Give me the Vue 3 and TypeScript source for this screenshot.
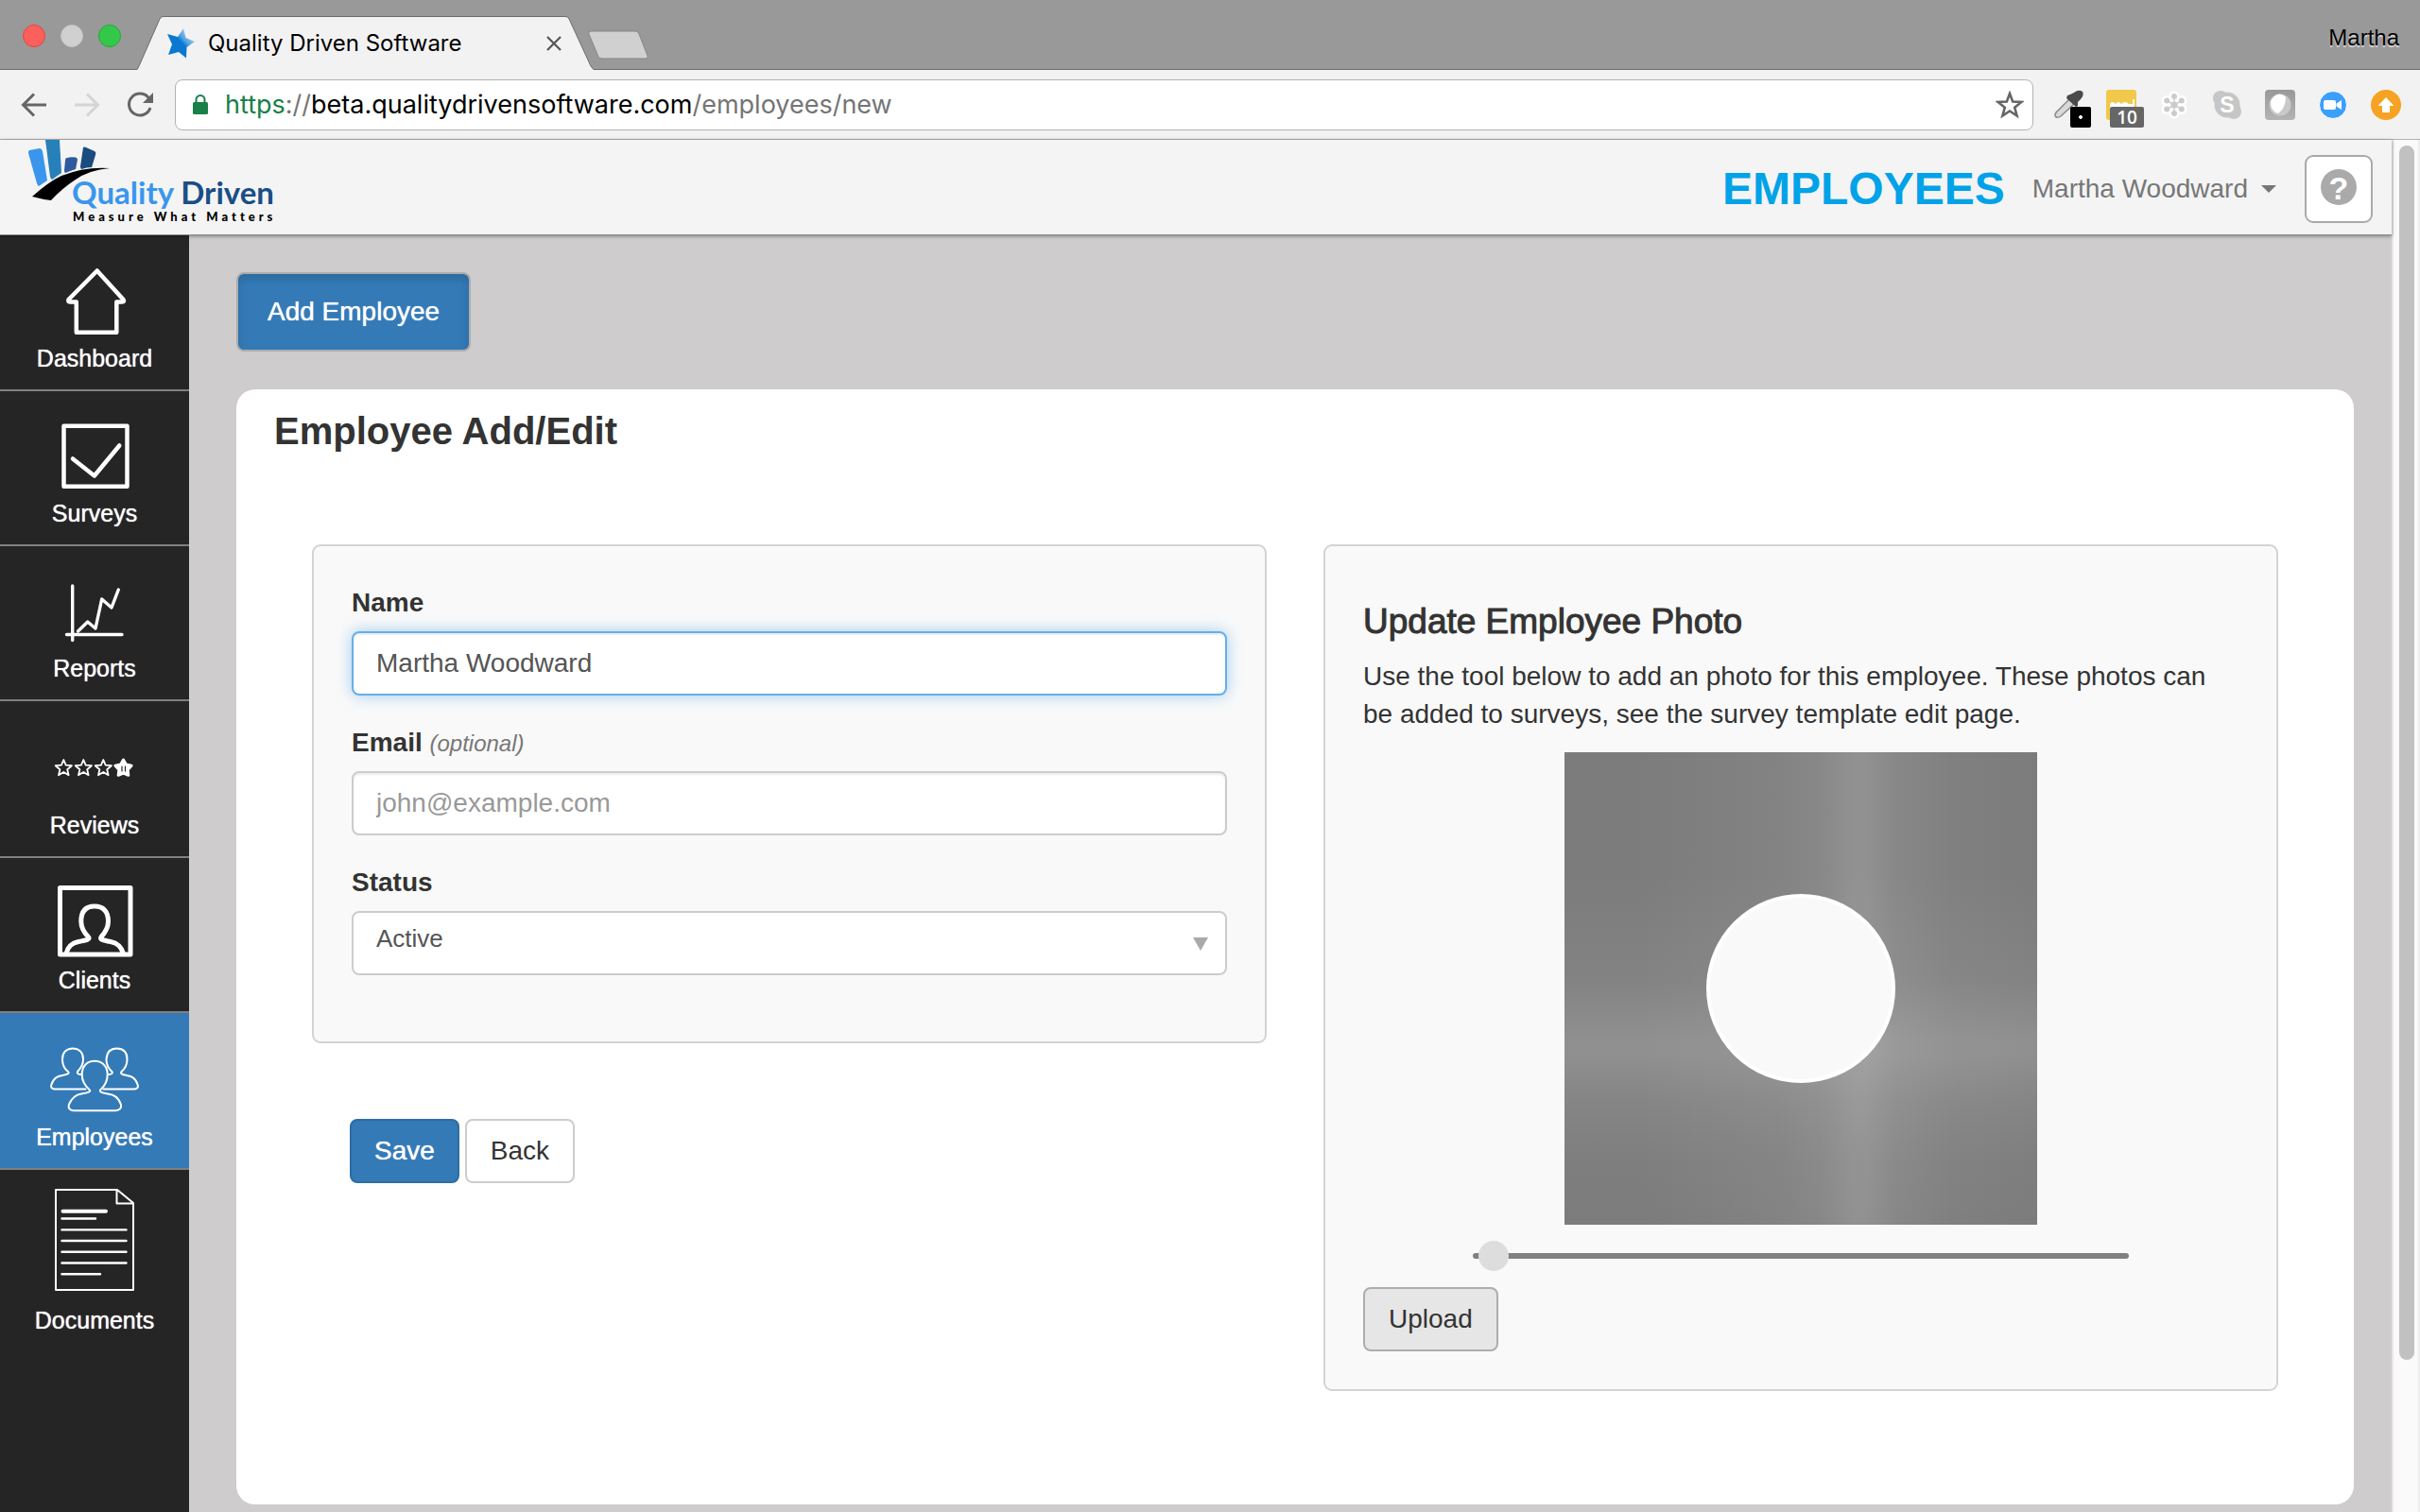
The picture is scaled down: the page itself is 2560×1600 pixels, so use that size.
<script setup lang="ts">
import { ref } from 'vue'

interface NavItem {
  label: string
  icon: string
  height: number
}

const navItems: NavItem[] = [
  { label: 'Dashboard', icon: 'house', height: 114 },
  { label: 'Surveys', icon: 'check', height: 114 },
  { label: 'Reports', icon: 'chart', height: 114 },
  { label: 'Reviews', icon: 'stars', height: 116 },
  { label: 'Clients', icon: 'client', height: 114 },
  { label: 'Employees', icon: 'people', height: 116 },
  { label: 'Documents', icon: 'document', height: 144 },
]

const activeItem = ref('Employees')
const name = ref('Martha Woodward')
const email = ref('')
const status = ref('Active')
const zoom = ref(0.01)

function starPoints(cx: number, cy: number, r: number, inner = 0.45): string {
  const points: string[] = []
  for (let i = 0; i < 10; i++) {
    const radius = i % 2 === 0 ? r : r * inner
    const angle = (Math.PI / 5) * i - Math.PI / 2
    points.push(`${(cx + radius * Math.cos(angle)).toFixed(1)},${(cy + radius * Math.sin(angle)).toFixed(1)}`)
  }
  return points.join(' ')
}
</script>

<template>
  <div class="browser">
    <div class="tab-strip">
      <div class="lights">
        <span class="light red"></span>
        <span class="light grey"></span>
        <span class="light green"></span>
      </div>
      <div class="tab">
        <svg class="tab-shape" viewBox="0 0 483 57" preserveAspectRatio="none" aria-hidden="true">
          <path d="M0 57 L2 53 L24 3 Q25 .5 28 .5 H453 Q456 .5 457 3 L480 53 L483 57 Z" fill="#f2f2f2" />
          <path d="M0 56.500 L2 53 L24 3 Q25 .5 28 .5 H453 Q456 .5 457 3 L480 53 L483 56.500" fill="none" stroke="#6c6c6c" />
        </svg>
        <svg class="favicon" width="30" height="32" viewBox="0 0 30 32" aria-hidden="true">
          <defs>
            <linearGradient id="fav" x1="1" y1="0" x2="0.4" y2="0.6">
              <stop offset="0.2" stop-color="#c3dff3" />
              <stop offset="0.65" stop-color="#4a9fe0" />
              <stop offset="0.8" stop-color="#0a78d1" />
            </linearGradient>
          </defs>
          <path d="M18 0 L20.500 10 L30 14 L21.500 20 L21 31.500 L13 25 L2 28 L6 17 L1 6 L12 9 Z" fill="url(#fav)" />
        </svg>
        <span class="tab-title">Quality Driven Software</span>
        <button class="plain tab-close" type="button" aria-label="Close tab">
          <svg width="16" height="16" viewBox="0 0 16 16"><path d="M1 1 L15 15 M15 1 L1 15" stroke="#555" stroke-width="2.200" /></svg>
        </button>
      </div>
      <button class="plain new-tab" type="button" aria-label="New tab">
        <svg width="66" height="32" viewBox="0 0 66 32">
          <path d="M4 1 H51 Q54 1 55 4 L64 27 Q65 30 62 30 H16 Q13 30 12 28 L2 4 Q1 1 4 1 Z" fill="#d0d0d0" stroke="#858585" />
        </svg>
      </button>
      <span class="profile">Martha</span>
    </div>

    <div class="toolbar">
      <div class="nav-buttons">
        <button class="plain" type="button" aria-label="Back">
          <svg width="28" height="28" viewBox="0 0 28 28"><path d="M27 14 H3 M14 2.500 L2.500 14 L14 25.500" fill="none" stroke="#666" stroke-width="3" /></svg>
        </button>
        <button class="plain" type="button" aria-label="Forward">
          <svg width="28" height="28" viewBox="0 0 28 28"><path d="M1 14 H25 M14 2.500 L25.500 14 L14 25.500" fill="none" stroke="#d4d4d4" stroke-width="3" /></svg>
        </button>
        <button class="plain" type="button" aria-label="Reload">
          <svg width="28" height="28" viewBox="0 0 28 28">
            <path d="M23.500 7 A11.500 11.500 0 1 0 25 17" fill="none" stroke="#666" stroke-width="3" />
            <path d="M28 1 V12 H17 Z" fill="#666" />
          </svg>
        </button>
      </div>
      <div class="omnibox">
        <svg width="16" height="22" viewBox="0 0 16 22" aria-hidden="true">
          <path d="M3.500 9 V5.500 A4.500 4.500 0 0 1 12.500 5.500 V9" fill="none" stroke="#188048" stroke-width="2" />
          <rect x="0" y="8" width="16" height="13" rx="1.500" fill="#188048" />
        </svg>
        <div class="url" role="textbox" tabindex="0" aria-label="Address"><span class="secure">https</span><span class="dim">://</span>beta.qualitydrivensoftware.com<span class="dim">/employees/new</span></div>
        <button class="plain" type="button" aria-label="Bookmark">
          <svg width="30" height="30" viewBox="0 0 30 30"><polygon :points="starPoints(15, 16, 13, 0.42)" fill="none" stroke="#666" stroke-width="2.600" /></svg>
        </button>
      </div>
      <div class="extensions">
        <span class="ext">
          <svg width="32" height="32" viewBox="0 0 32 32">
            <path d="M3 29 Q1 27 3 24 L17 10 L22 15 L8 28 Q5 30 3 29 Z" fill="#d9d9d9" stroke="#8a8a8a" stroke-width="1.500" />
            <path d="M15 6 L18 5 L22 3 Q27 -1 31 2 Q33 6 29 10 L26 13 L26 17 L24 18 L14 9 Z" fill="#4a4a4a" />
          </svg>
          <span class="badge black"></span>
        </span>
        <span class="ext">
          <svg width="32" height="32" viewBox="0 0 32 32">
            <rect width="32" height="32" rx="3" fill="#f0c84b" />
            <path d="M4 20 V15 Q7 11 10 15 Q13 11 16 15 Q20 11 24 15 L28 15 V10 H30 V20 Z" fill="#fff" />
          </svg>
          <span class="badge count">10</span>
        </span>
        <span class="ext">
          <svg width="32" height="32" viewBox="0 0 32 32">
            <g fill="#fff">
              <circle cx="16" cy="16" r="9" />
              <circle cx="16" cy="7" r="5.500" /><circle cx="16" cy="25" r="5.500" />
              <circle cx="8.200" cy="11.500" r="5.500" /><circle cx="23.800" cy="11.500" r="5.500" />
              <circle cx="8.200" cy="20.500" r="5.500" /><circle cx="23.800" cy="20.500" r="5.500" />
            </g>
            <path d="M16 7 V25 M8.200 11.500 L23.800 20.500 M8.200 20.500 L23.800 11.500" stroke="#d0d0d0" stroke-width="1.500" />
            <g fill="#cbcbcb">
              <circle cx="16" cy="16" r="3.600" />
              <circle cx="16" cy="7" r="3" /><circle cx="16" cy="25" r="3" />
              <circle cx="8.200" cy="11.500" r="3" /><circle cx="23.800" cy="11.500" r="3" />
              <circle cx="8.200" cy="20.500" r="3" /><circle cx="23.800" cy="20.500" r="3" />
            </g>
          </svg>
        </span>
        <span class="ext">
          <svg width="32" height="32" viewBox="0 0 32 32">
            <g fill="#c6c6c6"><circle cx="16" cy="16" r="13.500" /><circle cx="9" cy="9" r="8" /><circle cx="23" cy="23" r="8" /></g>
            <text x="16" y="24" text-anchor="middle" font-family="Liberation Sans, sans-serif" font-weight="700" font-size="23" fill="#fff">S</text>
          </svg>
        </span>
        <span class="ext">
          <svg width="32" height="32" viewBox="0 0 32 32">
            <defs>
              <linearGradient id="tile" x1="0" y1="0" x2="0" y2="1">
                <stop offset="0" stop-color="#989898" />
                <stop offset="1" stop-color="#b4b4b4" />
              </linearGradient>
            </defs>
            <rect width="32" height="32" rx="4" fill="url(#tile)" />
            <circle cx="16" cy="16" r="11.500" fill="#c9c9c9" />
            <path d="M6 13 Q8 6 15 4.500 Q20 5 22 8 Q22 19 14 25 Q6 23 6 13 Z" fill="#fff" />
          </svg>
        </span>
        <span class="ext">
          <svg width="32" height="32" viewBox="0 0 32 32">
            <circle cx="16" cy="16" r="14.500" fill="#3c9ffb" stroke="#fff" />
            <rect x="6" y="11" width="13" height="10" rx="2" fill="#fff" />
            <path d="M19.500 14.500 L25 11 V21 L19.500 17.500 Z" fill="#fff" />
          </svg>
        </span>
        <span class="ext">
          <svg width="32" height="32" viewBox="0 0 32 32">
            <circle cx="16" cy="16" r="16" fill="#f6a323" />
            <path d="M16 8 L24.500 17 H20 V24 H12 V17 H7.500 Z" fill="#fff" />
          </svg>
        </span>
      </div>
    </div>

    <div class="viewport">
      <div class="page">
        <header class="header">
          <svg class="logo" width="300" height="100" viewBox="0 0 300 100" role="img" aria-label="Quality Driven, Measure What Matters">
            <path d="M31 11 L42 9 Q44 9 45 12 L50 43 L41 49 Q40 49 39 46 L30 14 Q30 11 31 11 Z" fill="#3a96ec" />
            <path d="M48 0 H63 L65 35 L55 42 Q54 42 53 39 Z" fill="#2780b9" />
            <path d="M71 19 Q74 18 80 18.500 Q82 19 82 21 L80 31 Q74 33 69 35 Q68 35 68 32 L69 22 Q69 19 71 19 Z" fill="#2e5b9f" />
            <path d="M88 8 Q89 7 91 8 L100 12 Q102 13 101 16 L97 29 Q92 29 86 31 Q85 30 85 28 Z" fill="#1a4c80" />
            <path d="M34 60 Q52 44 65 38 Q90 28 116 30 Q94 32 80 42 Q66 51 54 64 Q45 63 34 60 Z" fill="#000" />
            <text x="76" y="68" class="logo-name"><tspan fill="#3a96ec">Quality</tspan><tspan fill="#1a4e86"> Driven</tspan></text>
            <text x="77" y="86" class="logo-tag">Measure What Matters</text>
          </svg>
          <div class="header-right">
            <span class="section">EMPLOYEES</span>
            <button class="plain user" type="button">Martha Woodward
              <svg width="16" height="8" viewBox="0 0 16 8" aria-hidden="true"><path d="M0 0 H16 L8 8 Z" fill="#777" /></svg>
            </button>
            <button class="help" type="button" aria-label="Help"><span class="help-mark">?</span></button>
          </div>
        </header>

        <div class="body">
          <nav class="sidebar">
            <a
              v-for="item in navItems"
              :key="item.label"
              href="#"
              class="nav-item"
              :class="{ active: item.label === activeItem }"
              @click.prevent="activeItem = item.label"
            >
              <svg width="200" :height="item.height" :viewBox="`0 0 200 ${item.height}`" fill="none" stroke="#fff" stroke-linecap="round" stroke-linejoin="round" aria-hidden="true">
                <path v-if="item.icon === 'house'" stroke-width="4.500" d="M102.700 36.500 L72.500 67 Q71.500 69.500 74 69.500 H80.800 V101.800 H123.300 V69.500 H129 Q132 69.500 130.500 67 Z" />
                <g v-else-if="item.icon === 'check'" stroke-width="4.500">
                  <rect x="67.500" y="36.800" width="67" height="64" />
                  <path d="M77 71.500 L99.800 89.500 L126.300 57.500" />
                </g>
                <g v-else-if="item.icon === 'chart'" stroke-width="3.400">
                  <path d="M76.700 42 V99.500 M70.500 93.500 H129" />
                  <path d="M82.500 90 L92.700 80 L101 87 L107.700 56 L118 65 L125.300 46" />
                </g>
                <g v-else-if="item.icon === 'stars'" stroke-width="1.800">
                  <polygon v-for="cx in [67.300, 88.300, 109.300]" :key="cx" :points="starPoints(cx, 71, 9)" />
                  <polygon :points="starPoints(130.500, 71, 9, 0.55)" fill="#fff" stroke-width="3" />
                  <path d="M129 69 V74 M132.500 69 V74" stroke="#252525" stroke-width="1.200" />
                </g>
                <g v-else-if="item.icon === 'client'" stroke-width="5">
                  <rect x="63.500" y="31.500" width="74.500" height="70.500" />
                  <path d="M70 101 C72 93 76 90 83 88.500 C91 87 96 86 93.500 83.500 C88 78 85.800 73 85.800 67 C85.800 56 91 51 100 51 C109 51 114.500 56 114.500 67 C114.500 73 112 78 107 83.500 C105 86 109 87 117 88.500 C124 90 128 93 130.500 101" />
                </g>
                <g v-else-if="item.icon === 'people'" stroke-width="2">
                  <path d="M90.500 80.500 H58 Q53 80 54.300 76 C57 68 61 67 66 66 C71 65 74 64 72 62 C68 59 66 54 66 49 C66 41 71 37.500 77 37.500 C83 37.500 88 41 88 49 C88 54 85 59 82 62 C81 64 83 65 86 65" />
                  <path d="M109.500 80.500 H142 Q147 80 145.700 76 C143 68 139 67 134 66 C129 65 127 64 128.500 62 C132 59 134.500 54 134.500 49 C134.500 41 130 37.500 123.500 37.500 C117 37.500 113 41 112.500 49 C112.500 54 115 59 118.500 62 C120 64 117 65 114.500 65" />
                  <path d="M78 103.300 H122 Q129 102.500 128 97 C125 89 121 86.500 114 85.500 C107 84.500 104.500 83 106.500 81 C111 77 113.700 71 113.700 65 C113.700 55 107 50.800 100.200 50.800 C93 50.800 86.700 55 86.700 65 C86.700 71 90 77 94.500 81 C97 83 93 84.500 86 85.500 C79 86.500 75 92 72.800 97 Q71.500 102.500 78 103.300 Z" />
                </g>
                <g v-else stroke-width="2">
                  <path d="M59 21 H124 L141 35 V127 H59 Z M123.500 21 V35.500 H141" />
                  <path stroke-width="4" d="M66.500 43.700 H112" />
                  <path stroke-width="2.400" d="M65.500 51.500 H101 M65.500 63.400 H133.500 M65.500 75 H133.500 M65.500 86.800 H133.500 M65.500 98.500 H133.500 M65.500 110.300 H106" />
                </g>
              </svg>
              <span class="nav-label">{{ item.label }}</span>
            </a>
          </nav>

          <main class="main">
            <button class="btn btn-primary btn-add" type="button">Add Employee</button>
            <section class="card">
              <h1 class="card-title">Employee Add/Edit</h1>
              <div class="columns">
                <form class="column" @submit.prevent>
                  <div class="panel">
                    <div class="field">
                      <label for="name">Name</label>
                      <input id="name" v-model="name" class="control focused" type="text" />
                    </div>
                    <div class="field">
                      <label for="email">Email <em>(optional)</em></label>
                      <input id="email" v-model="email" class="control" type="email" placeholder="john@example.com" />
                    </div>
                    <div class="field">
                      <label for="status">Status</label>
                      <div class="select-wrap">
                        <select id="status" v-model="status" class="control select">
                          <option>Active</option>
                          <option>Inactive</option>
                        </select>
                        <svg class="select-arrow" width="16" height="14" viewBox="0 0 16 14" aria-hidden="true"><path d="M0 0 H16 L8 14 Z" fill="#aaa" /></svg>
                      </div>
                    </div>
                  </div>
                  <div class="actions">
                    <button class="btn btn-primary" type="submit">Save</button>
                    <button class="btn btn-default" type="button">Back</button>
                  </div>
                </form>
                <div class="column">
                  <div class="panel">
                    <h2 class="panel-title">Update Employee Photo</h2>
                    <p class="panel-text">Use the tool below to add an photo for this employee. These photos can be added to surveys, see the survey template edit page.</p>
                    <div class="cropper"><div class="crop-circle"></div></div>
                    <input v-model.number="zoom" class="slider" type="range" min="0" max="1" step="0.01" aria-label="Photo zoom" />
                    <button class="btn btn-default btn-upload" type="button">Upload</button>
                  </div>
                </div>
              </div>
            </section>
          </main>
        </div>
      </div>
      <div class="scrollbar" aria-hidden="true"><div class="thumb"></div></div>
    </div>
  </div>
</template>

<style>
body {
  margin: 0;
}
</style>

<style scoped>
.browser,
.browser * {
  box-sizing: border-box;
}
.browser {
  display: flex;
  flex-direction: column;
  min-height: 100vh;
  background: #cecccd;
  color: #333;
  font-family: "Liberation Sans", Arial, sans-serif;
  font-size: 28px;
  line-height: 40px;
}
button,
input,
select {
  font: inherit;
  margin: 0;
}
svg {
  display: block;
  flex: none;
}
.plain {
  display: block;
  padding: 0;
  border: 0;
  background: none;
  color: inherit;
}

/* Tab strip */
.tab-strip {
  display: flex;
  height: 74px;
  background: #999;
  border-bottom: 1px solid #6c6c6c;
}
.lights {
  display: flex;
  gap: 16px;
  padding: 26px 17px 0 24px;
}
.light {
  width: 24px;
  height: 24px;
  border-radius: 50%;
}
.red {
  background: #fc605c;
  border: 1px solid #df4744;
}
.grey {
  background: #d0d0d0;
  border: 1px solid #c2c2c2;
}
.green {
  background: #34c84a;
  border: 1px solid #24a936;
}
.tab {
  position: relative;
  display: flex;
  align-items: center;
  flex: 0 0 483px;
  height: 57px;
  margin-top: 17px;
  padding: 0 34px 0 31px;
}
.tab-shape {
  position: absolute;
  inset: 0;
  width: 100%;
  height: 100%;
}
.favicon,
.tab-title,
.tab-close {
  position: relative;
}
.tab-title {
  flex: 1;
  margin-left: 14px;
  color: #000;
  font-family: Inter, sans-serif;
  font-size: 24px;
  line-height: 32px;
}
.new-tab {
  align-self: flex-end;
  margin: 0 0 9px -7px;
}
.profile {
  margin-left: auto;
  padding: 20px 22px 0 0;
  color: #000;
  font-size: 24px;
  text-shadow: 0 2px 1px #d8d8d8;
}

/* Toolbar */
.toolbar {
  display: flex;
  align-items: center;
  height: 74px;
  padding: 0 20px 0 22px;
  background: #f2f2f2;
  border-bottom: 1px solid #b0b0b0;
}
.nav-buttons {
  display: flex;
  gap: 28px;
}
.omnibox {
  display: flex;
  align-items: center;
  flex: 1;
  height: 54px;
  margin: 0 21px 0 23px;
  padding: 0 9px 0 18px;
  background: #fff;
  border: 1px solid #b2b2b2;
  border-radius: 8px;
}
.url {
  flex: 1;
  margin-left: 18px;
  color: #000;
  font-family: Inter, sans-serif;
  font-size: 27px;
}
.secure {
  color: #188048;
}
.dim {
  color: #757575;
}
.extensions {
  display: flex;
  gap: 24px;
}
.ext {
  position: relative;
  width: 32px;
  height: 32px;
}
.badge {
  position: absolute;
  height: 22px;
  border-radius: 2px;
  top: 18px;
}
.black {
  left: 18px;
  width: 22px;
  background: radial-gradient(circle, #fff 0 2px, #000 2px);
}
.count {
  left: 4px;
  width: 36px;
  background: #666;
  color: #fff;
  font-family: "Open Sans", sans-serif;
  font-weight: 600;
  font-size: 19px;
  line-height: 22px;
  text-align: center;
}

/* Page */
.viewport {
  display: flex;
  flex: 1;
}
.page {
  display: flex;
  flex-direction: column;
  flex: 1;
  min-width: 0;
}
.scrollbar {
  display: grid;
  grid-template-rows: 8fr 1fr;
  flex: 0 0 30px;
  padding: 6px 4px 0 6px;
  background: #fafafa;
  border-left: 2px solid #e7e7e7;
  border-right: 2px solid #ededed;
}
.thumb {
  width: 16px;
  border-radius: 8px;
  background: #c1c1c1;
}
.header {
  position: relative;
  display: flex;
  justify-content: space-between;
  height: 101px;
  background: #f4f4f4;
  border-bottom: 1px solid #8c8c8c;
  box-shadow: 0 1px 4px rgba(0, 0, 0, 0.4);
}
.logo-name {
  font-family: Lato, sans-serif;
  font-weight: 700;
  font-size: 33px;
}
.logo-tag {
  font-family: Lato, sans-serif;
  font-weight: 900;
  font-size: 13px;
  letter-spacing: 4px;
}
.header-right {
  display: flex;
  align-items: center;
  padding: 4px 20px 0 0;
}
.section {
  color: #00a2e8;
  font-size: 48px;
  font-weight: 700;
}
.user {
  display: flex;
  align-items: center;
  gap: 14px;
  margin: 0 30px 0 29px;
  color: #777;
}
.help {
  display: flex;
  align-items: center;
  justify-content: center;
  width: 72px;
  height: 72px;
  padding: 0 0 4px;
  background: #fff;
  border: 2px solid #aaa;
  border-radius: 9px;
}
.help-mark {
  width: 38px;
  height: 38px;
  border-radius: 50%;
  background: #aaa;
  color: #fff;
  font-size: 34px;
  font-weight: 700;
  line-height: 40px;
  text-align: center;
}
.body {
  display: flex;
  flex: 1;
}
.sidebar {
  flex: 0 0 200px;
  padding-top: 1px;
  background: #252525;
}
.nav-item {
  display: block;
  padding-bottom: 18px;
  border-bottom: 2px solid #808080;
  color: #fff;
  text-decoration: none;
}
.nav-item:last-child {
  border-bottom: 0;
}
.nav-item.active {
  background: #337ab7;
}
.nav-label {
  display: block;
  font-size: 25px;
  line-height: 30px;
  text-align: center;
  text-shadow: 0 0 1px #fff;
}
.main {
  display: flex;
  flex-direction: column;
  align-items: flex-start;
  flex: 1;
  min-width: 0;
  padding: 39px 40px 8px 50px;
}
.btn {
  height: 68px;
  padding: 0 24px;
  border: 2px solid;
  border-radius: 8px;
}
.btn-primary {
  background: #337ab7;
  border-color: #2e6da4;
  color: #fff;
  text-shadow: 0 0 1px #fff;
}
.btn-default {
  padding: 0 25px;
  background: #fff;
  border-color: #ccc;
  color: #333;
}
.btn-add {
  height: 84px;
  padding: 0 31px;
  border-color: #adadad;
  box-shadow: inset 0 6px 10px rgba(0, 0, 0, 0.125);
}
.card {
  align-self: stretch;
  flex: 1;
  margin-top: 40px;
  padding: 21px 80px 80px;
  background: #fff;
  border-radius: 20px;
}
.card-title {
  margin: 0 -40px;
  font-size: 40px;
  font-weight: 700;
  line-height: 46px;
}
.columns {
  display: grid;
  grid-template-columns: 1fr 1fr;
  gap: 60px;
  margin-top: 97px;
}
.panel {
  padding: 40px;
  background: #f9f9f9;
  border: 2px solid #d3d3d3;
  border-radius: 9px;
}
.field {
  margin-bottom: 30px;
}
label {
  display: block;
  margin-bottom: 10px;
  font-weight: 700;
}
label em {
  color: #777;
  font-size: 24px;
  font-weight: 400;
  line-height: 24px;
}
.control {
  display: block;
  width: 100%;
  height: 68px;
  padding: 0 24px;
  background: #fff;
  border: 2px solid #ccc;
  border-radius: 8px;
  box-shadow: inset 0 2px 2px rgba(0, 0, 0, 0.075);
  color: #555;
  outline: none;
}
.control::placeholder {
  color: #999;
  opacity: 1;
}
.focused {
  border-color: #66afe9;
  box-shadow: inset 0 2px 2px rgba(0, 0, 0, 0.075), 0 0 16px rgba(102, 175, 233, 0.6);
}
.select-wrap {
  position: relative;
}
.select {
  appearance: none;
  padding-bottom: 10px;
  box-shadow: none;
  font-size: 26px;
}
.select-arrow {
  position: absolute;
  top: 28px;
  right: 20px;
  pointer-events: none;
}
.actions {
  display: flex;
  gap: 6px;
  padding: 80px 40px 0;
}
.panel-title {
  margin: 20px 0 18px;
  font-size: 37px;
  font-weight: 400;
  line-height: 40px;
  -webkit-text-stroke: 1px #333;
}
.panel-text {
  margin: 0 0 20px;
}
.cropper {
  display: grid;
  place-items: center;
  width: 500px;
  height: 500px;
  margin: 0 auto;
  background:
    linear-gradient(90deg, transparent 15%, rgba(255, 255, 255, 0.05) 45%, rgba(255, 255, 255, 0.09) 54%, rgba(255, 255, 255, 0.16) 61%, rgba(255, 255, 255, 0.16) 64%, rgba(255, 255, 255, 0.09) 70%, rgba(255, 255, 255, 0.03) 82%, transparent),
    linear-gradient(transparent 25%, rgba(255, 255, 255, 0.05) 48%, rgba(255, 255, 255, 0.15) 61%, rgba(255, 255, 255, 0.15) 64%, rgba(255, 255, 255, 0.07) 74%, rgba(255, 255, 255, 0.02) 86%, transparent),
    #7c7c7c;
}
.crop-circle {
  width: 200px;
  height: 200px;
  border: 4px solid #fff;
  border-radius: 50%;
  background: #f9f9f9;
}
.slider {
  display: block;
  width: 75%;
  height: 66px;
  margin: 0 auto;
  appearance: none;
  background: none;
}
.slider::-webkit-slider-runnable-track {
  height: 6px;
  border-radius: 3px;
  background: #808080;
}
.slider::-webkit-slider-thumb {
  appearance: none;
  width: 32px;
  height: 32px;
  margin-top: -13px;
  border-radius: 50%;
  background: #ddd;
}
.btn-upload {
  display: block;
  background: #e6e6e6;
  border-color: #adadad;
}
</style>
